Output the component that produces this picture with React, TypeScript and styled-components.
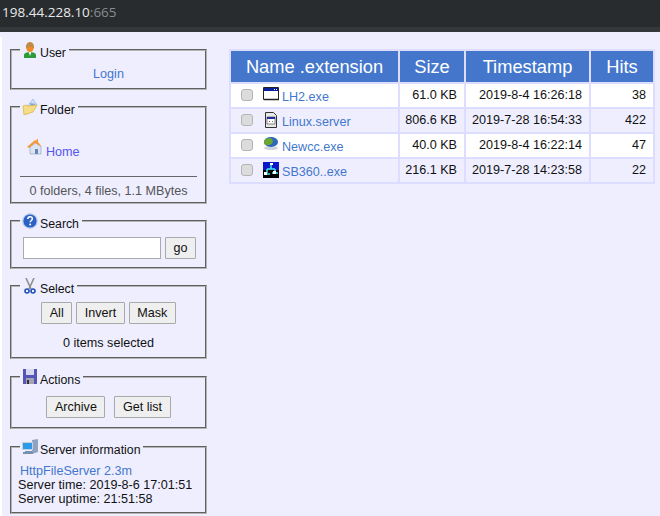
import React from "react";
import styled, { createGlobalStyle } from "styled-components";

const GlobalStyle = createGlobalStyle`
  html, body {
    margin: 0;
    padding: 0;
    width: 660px;
    height: 516px;
    overflow: hidden;
    background: #eeeeff;
    font-family: "Liberation Sans", sans-serif;
    font-size: 12.6px;
    line-height: 15px;
    color: #111;
  }
`;

const AddressBar = styled.div`
  height: 27px;
  background: #282c2f;
  border-bottom: 5px solid #343839;
  color: #e8e8e8;
  font: 13.5px/25px "Open Sans", sans-serif;
  padding-left: 2px;
  span { color: #8a8d8e; }
`;

const Page = styled.div`
  display: flex;
  align-items: flex-start;
  border-left: 2px solid #fff;
  margin-top: 5px;
  height: 479px;
`;

const Sidebar = styled.div`
  width: 197px;
  margin: 5px 0 0 8px;
  flex: none;
  display: flex;
  flex-direction: column;
`;

const Panel = styled.fieldset<{ $height: number; $gap: number }>`
  box-sizing: border-box;
  margin: 0 0 ${(p) => p.$gap}px;
  padding: 0 8px;
  height: ${(p) => p.$height}px;
  border: 2px groove #b4b4b4;
  min-width: 0;
`;

const Legend = styled.legend`
  padding: 0 3px 0 2px;
  display: flex;
  align-items: flex-start;
  gap: 2px;
  height: 16px;
  svg { flex: none; }
`;

const LegendLabel = styled.span`
  margin-top: 4px;
  font-size: 12.3px;
  white-space: nowrap;
`;

const Centered = styled.div<{ $top: number }>`
  text-align: center;
  margin-top: ${(p) => p.$top}px;
`;

const Link = styled.a<{ $visited?: boolean }>`
  color: ${(p) => (p.$visited ? "#5555ee" : "#4477cc")};
  text-decoration: none;
`;

const HomeRow = styled.div`
  display: flex;
  align-items: flex-start;
  gap: 3px;
  margin: 24px 0 16px 7px;
  a { margin-top: 6px; }
`;

const Summary = styled.div`
  border-top: 1px solid #666;
  text-align: center;
  padding-top: 7px;
  color: #555;
`;

const SearchRow = styled.div`
  display: flex;
  gap: 4px;
  margin: 8px 0 0 3px;
`;

const SearchInput = styled.input`
  box-sizing: border-box;
  width: 138px;
  height: 22px;
  background: #fff;
  border: 1px solid #aaa;
`;

const Button = styled.button`
  box-sizing: border-box;
  height: 22px;
  padding: 0 7.5px;
  background: #efefef;
  border: 1px solid #a9a9a9;
  border-radius: 1px;
  font: inherit;
  color: #111;
`;

const ButtonRow = styled.div<{ $gap: number; $top: number }>`
  display: flex;
  justify-content: center;
  gap: ${(p) => p.$gap}px;
  margin-top: ${(p) => p.$top}px;
`;

const ServerInfo = styled.div`
  line-height: 14px;
  margin: 9px 0 0 -2px;
  white-space: nowrap;
  a { display: block; margin-left: 2px; }
`;

const Main = styled.div`
  margin: 12px 0 0 22px;
`;

const Table = styled.table`
  border-collapse: separate;
  border-spacing: 2px;
  background: #ddddff;
  table-layout: fixed;
  width: 426px;
`;

const Th = styled.th<{ $width: number }>`
  width: ${(p) => p.$width}px;
  height: 31px;
  padding: 0;
  background: #4477cc;
  color: #fff;
  font: 400 18.3px "Liberation Sans", sans-serif;
  text-align: center;
`;

const Tr = styled.tr<{ $even: boolean }>`
  background: ${(p) => (p.$even ? "#eeeeff" : "#ffffff")};
`;

const Td = styled.td`
  height: 23px;
  padding: 0 7px 0 0;
  text-align: right;
  white-space: nowrap;
`;

const NameTd = styled.td`
  padding: 0;
  white-space: nowrap;
`;

const NameCell = styled.div`
  display: flex;
  align-items: flex-start;
  height: 23px;
  padding-left: 10px;
  svg { flex: none; margin: 3px 3px 0 0; }
`;

const Check = styled.span`
  box-sizing: border-box;
  flex: none;
  width: 12px;
  height: 12px;
  margin: 5px 10px 0 0;
  background: #dcdcdc;
  border: 1px solid #b4b4b4;
  border-radius: 3px;
`;

const FileLink = styled(Link)`
  margin-top: 6px;
`;

const UserIcon = () => (
  <svg width="16" height="16" viewBox="0 0 16 16">
    <path d="M2 16v-3c0-2 3-3 6-3s6 1 6 3v3z" fill="#2f9a3a" />
    <path d="M6.500 10h3L8 14z" fill="#e8f3e8" />
    <path d="M4 5c0 3 2 5 4 5s4-2 4-5z" fill="#f08a24" />
    <path d="M4 6c-.5-4 2-6 4-6s4.500 2 4 6c-2-1.500-6-1.500-8 0z" fill="#c08a48" />
  </svg>
);

const FolderIcon = () => (
  <svg width="16" height="16" viewBox="0 0 16 16">
    <path d="M4 9 11 0l4 6-8 6z" fill="#cfe0f8" stroke="#8fb0dc" strokeWidth=".6" />
    <path d="M8 4l6 1-5 3z" fill="#7fa8de" />
    <path d="M1 7l3-1 2 1 9-1-4 7-9 3z" fill="#f6dc84" stroke="#d8b040" strokeWidth=".7" />
  </svg>
);

const HomeIcon = () => (
  <svg width="16" height="16" viewBox="0 0 16 16">
    <path d="M3 8v7h11V8L9 4z" fill="#dbe4f2" stroke="#8aa0c0" strokeWidth=".6" />
    <path d="M8 10h3v5H8z" fill="#6b85b0" />
    <path d="M0 8l8-7 1 1 1-2h1v3l4 5-7-4-6 5z" fill="#f59a3c" />
  </svg>
);

const HelpIcon = () => (
  <svg width="16" height="16" viewBox="0 0 16 16">
    <circle cx="8" cy="8" r="7.200" fill="#2b62c4" stroke="#b8cdea" strokeWidth="1.200" />
    <path d="M5.800 6c0-3 4.600-3 4.600-.3 0 1.800-2.200 1.800-2.200 3.600" fill="none" stroke="#fff" strokeWidth="1.500" />
    <circle cx="8.200" cy="11.500" r="1" fill="#fff" />
  </svg>
);

const ScissorsIcon = () => (
  <svg width="16" height="16" viewBox="0 0 16 16">
    <path d="M4 0l5 11M12 0 7 11" stroke="#8d8d8d" strokeWidth="1.600" fill="none" />
    <circle cx="5" cy="13" r="2" fill="none" stroke="#1f50b8" strokeWidth="1.600" />
    <circle cx="11" cy="13" r="2" fill="none" stroke="#1f50b8" strokeWidth="1.600" />
  </svg>
);

const SaveIcon = () => (
  <svg width="16" height="16" viewBox="0 0 16 16">
    <path d="M1 0h14v15H1z" fill="#5656b8" />
    <path d="M4 0h8v6H4z" fill="#d8d8ee" />
    <path d="M4 9h8v6H4z" fill="#a4a4b4" />
    <path d="M5 11h2v4H5z" fill="#333" />
  </svg>
);

const ServerIcon = () => (
  <svg width="16" height="16" viewBox="0 0 16 16">
    <path d="M10 1l6-1v13l-6 2z" fill="#8fa4c4" />
    <path d="M0 3h11v8H0z" fill="#c4d0de" />
    <path d="M1 4h9v6H1z" fill="#2f9ae8" />
    <path d="M3 12h7v1H3zM1 13h10v2H1z" fill="#7890b0" />
  </svg>
);

const WindowIcon = () => (
  <svg width="16" height="16" viewBox="0 0 16 16">
    <path d="M.5.5h15v12H.5z" fill="#fff" stroke="#222" />
    <path d="M1 1h14v3H1z" fill="#0a1f9c" />
    <path d="M11 2h1v1h-1zM13 2h1v1h-1z" fill="#fff" />
    <path d="M1 12.500h15" stroke="#222" strokeWidth="1.500" />
  </svg>
);

const ServerFileIcon = () => (
  <svg width="16" height="16" viewBox="0 0 16 16">
    <path d="M2.500.5h8l3 3v12h-11z" fill="#e8e8e8" stroke="#333" />
    <path d="M4 5h8v7H4z" fill="#fff" stroke="#333" strokeWidth=".6" />
    <path d="M4 5h8v2H4z" fill="#1c2f9c" />
    <path d="M6 9h1v1H6z" fill="#c33" />
    <path d="M9 9h1v1H9z" fill="#2a9a3a" />
  </svg>
);

const GlobeIcon = () => (
  <svg width="16" height="16" viewBox="0 0 16 16">
    <ellipse cx="8" cy="11" rx="7" ry="2" fill="#cfd4dc" />
    <ellipse cx="8" cy="5" rx="7" ry="5" fill="#2f68b8" />
    <path d="M1 5c1-4 6-5 8-3s0 6-3 6-5 0-5-3z" fill="#6aa82f" />
  </svg>
);

const SbIcon = () => (
  <svg width="16" height="16" viewBox="0 0 16 16">
    <path d="M0 0h16v16H0z" fill="#000" />
    <path d="M0 0h16v8H0z" fill="#0a18c8" />
    <path d="M8 2v5M4 7h8M2 12h5M9 11h6M4 7v4M12 7v3" stroke="#3ee6e6" strokeWidth="1.500" fill="none" />
    <path d="M7 1h3v2H7zM1 10h3v3H1zM10 9h3v3h-3z" fill="#fff" />
  </svg>
);

const files = [
  { name: "LH2.exe", size: "61.0 KB", time: "2019-8-4 16:26:18", hits: 38, icon: <WindowIcon /> },
  { name: "Linux.server", size: "806.6 KB", time: "2019-7-28 16:54:33", hits: 422, icon: <ServerFileIcon /> },
  { name: "Newcc.exe", size: "40.0 KB", time: "2019-8-4 16:22:14", hits: 47, icon: <GlobeIcon /> },
  { name: "SB360..exe", size: "216.1 KB", time: "2019-7-28 14:23:58", hits: 22, icon: <SbIcon /> },
];

export default function App() {
  return (
    <>
      <GlobalStyle />
      <AddressBar>
        198.44.228.10<span>:665</span>
      </AddressBar>
      <Page>
        <Sidebar>
          <Panel $height={48} $gap={9}>
            <Legend><UserIcon /><LegendLabel>User</LegendLabel></Legend>
            <Centered $top={9}><Link href="#">Login</Link></Centered>
          </Panel>
          <Panel $height={105} $gap={9}>
            <Legend><FolderIcon /><LegendLabel>Folder</LegendLabel></Legend>
            <HomeRow><HomeIcon /><Link href="#" $visited>Home</Link></HomeRow>
            <Summary>0 folders, 4 files, 1.1 MBytes</Summary>
          </Panel>
          <Panel $height={56} $gap={9}>
            <Legend><HelpIcon /><LegendLabel>Search</LegendLabel></Legend>
            <SearchRow><SearchInput /><Button>go</Button></SearchRow>
          </Panel>
          <Panel $height={81} $gap={10}>
            <Legend><ScissorsIcon /><LegendLabel>Select</LegendLabel></Legend>
            <ButtonRow $gap={4} $top={8}>
              <Button>All</Button>
              <Button>Invert</Button>
              <Button>Mask</Button>
            </ButtonRow>
            <Centered $top={12}>0 items selected</Centered>
          </Panel>
          <Panel $height={60} $gap={10}>
            <Legend><SaveIcon /><LegendLabel>Actions</LegendLabel></Legend>
            <ButtonRow $gap={9} $top={11}>
              <Button>Archive</Button>
              <Button>Get list</Button>
            </ButtonRow>
          </Panel>
          <Panel $height={75} $gap={0}>
            <Legend><ServerIcon /><LegendLabel>Server information</LegendLabel></Legend>
            <ServerInfo>
              <Link href="#">HttpFileServer 2.3m</Link>
              Server time: 2019-8-6 17:01:51
              <br />
              Server uptime: 21:51:58
            </ServerInfo>
          </Panel>
        </Sidebar>
        <Main>
          <Table>
            <thead>
              <tr>
                <Th $width={167}>Name .extension</Th>
                <Th $width={64}>Size</Th>
                <Th $width={123}>Timestamp</Th>
                <Th $width={62}>Hits</Th>
              </tr>
            </thead>
            <tbody>
              {files.map((f, i) => (
                <Tr key={f.name} $even={i % 2 === 1}>
                  <NameTd>
                    <NameCell>
                      <Check />
                      {f.icon}
                      <FileLink href="#">{f.name}</FileLink>
                    </NameCell>
                  </NameTd>
                  <Td>{f.size}</Td>
                  <Td>{f.time}</Td>
                  <Td>{f.hits}</Td>
                </Tr>
              ))}
            </tbody>
          </Table>
        </Main>
      </Page>
    </>
  );
}
